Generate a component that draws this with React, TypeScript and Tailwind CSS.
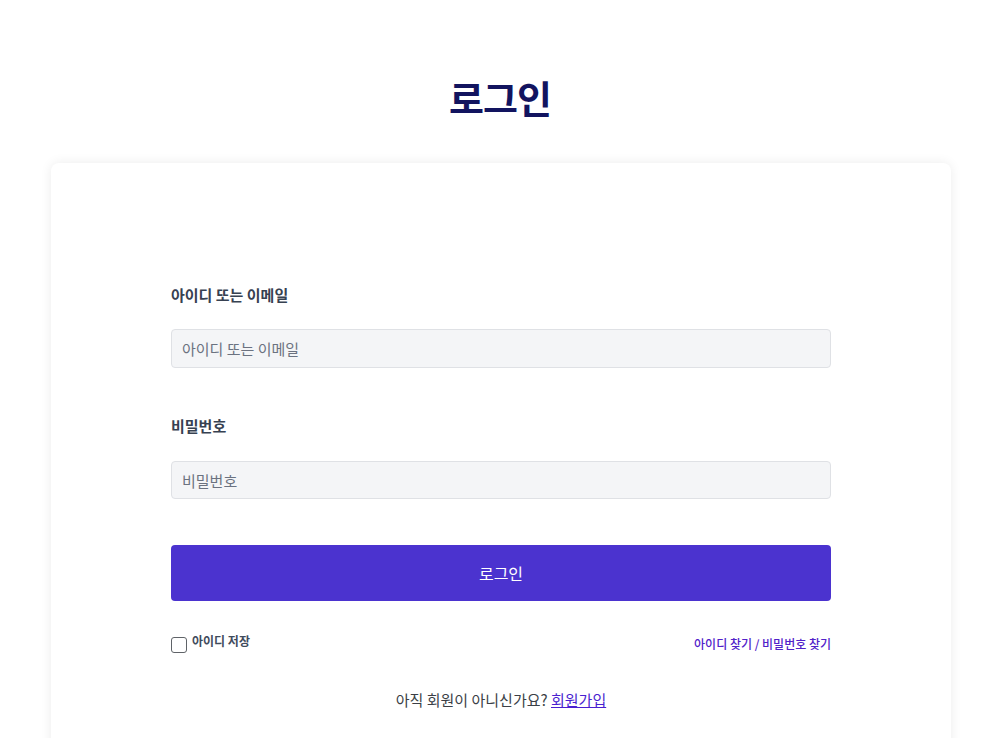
import React from 'react';

export default function App() {
  return (
    <div
      className="min-h-[738px] bg-white flex flex-col items-center"
      style={{ fontFamily: '"Noto Sans CJK KR", "Noto Sans", sans-serif' }}
    >
      {/* Page title */}
      <h1 className="mt-[70px] text-[38px] leading-[54px] font-bold text-[#12145f] tracking-tight">로그인</h1>

      {/* Login card */}
      <div className="mt-[39px] ml-[2px] w-[900px] bg-white rounded-lg shadow-[0_0_12px_rgba(0,0,0,0.08)] px-[120px] pt-[121px] pb-[60px]">
        <label className="block text-[15px] leading-[22px] font-semibold text-[#374151]">아이디 또는 이메일</label>
        <input
          type="text"
          placeholder="아이디 또는 이메일"
          className="mt-[23px] block w-full h-[39px] px-[10px] rounded border border-[#dfe1e5] bg-[#f4f5f7] text-[15px] placeholder:text-[#6b7280] outline-none"
        />

        <label className="block mt-[47px] text-[15px] leading-[22px] font-semibold text-[#374151]">비밀번호</label>
        <input
          type="password"
          placeholder="비밀번호"
          className="mt-[24px] block w-full h-[38px] px-[10px] rounded border border-[#dfe1e5] bg-[#f4f5f7] text-[15px] placeholder:text-[#6b7280] outline-none"
        />

        <button className="mt-[46px] w-full h-[56px] rounded bg-[#4b33cf] text-white text-[16px]">로그인</button>

        {/* Remember / find links */}
        <div className="mt-[33px] flex items-start justify-between">
          <label className="flex items-start gap-[5px]">
            <input type="checkbox" className="mt-[3px] w-[16px] h-[16px] appearance-none rounded-[3px] border border-[#5f6368] bg-white" />
            <span className="-mt-[1px] text-[12px] leading-[16px] font-bold text-[#3f4b5c]">아이디 저장</span>
          </label>
          <a href="#" className="mt-[1px] text-[12px] leading-[18px] font-medium text-[#5121c9]">아이디 찾기 / 비밀번호 찾기</a>
        </div>

        <p className="mt-[36px] text-center text-[15px] leading-[22px] text-[#3b3f46]">
          아직 회원이 아니신가요? <a href="#" className="underline text-[#4a1fd0]">회원가입</a>
        </p>
      </div>
    </div>
  );
}
